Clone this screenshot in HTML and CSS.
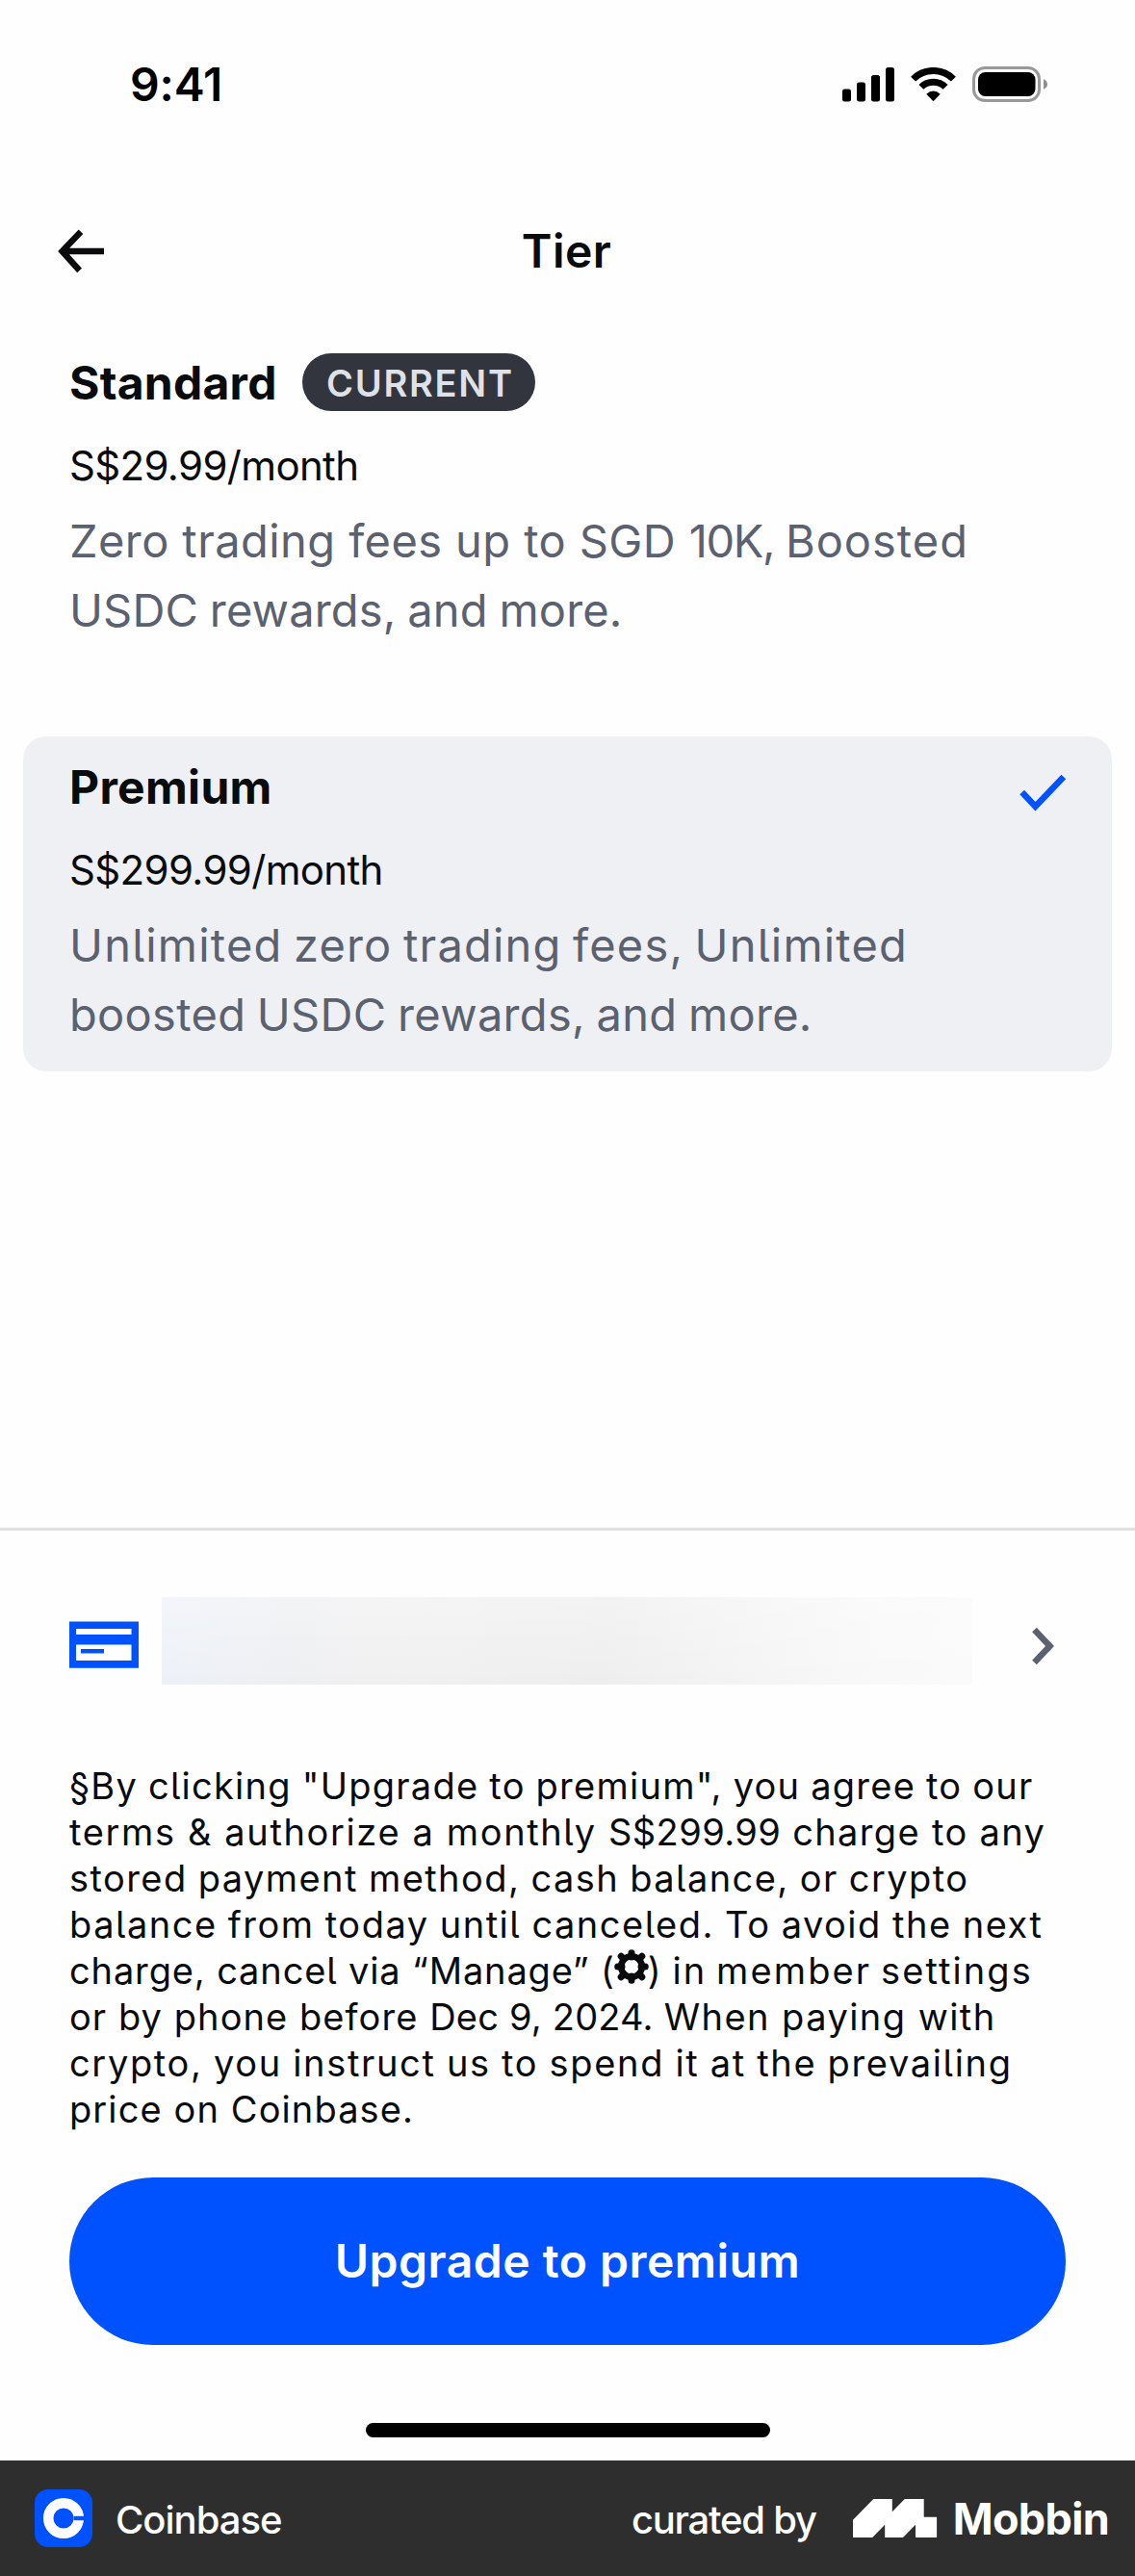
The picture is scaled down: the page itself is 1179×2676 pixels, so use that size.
FILE: index.html
```html
<!DOCTYPE html>
<html lang="en">
<head>
<meta charset="utf-8">
<title>Tier</title>
<link rel="stylesheet" href="styles.css">
</head>
<body>
<div class="screen">
  <header class="status-bar">
    <span class="time">9:41</span>
    <div class="status-icons">
      <svg class="signal" width="54" height="36" viewBox="0 0 54 36"><rect x="0" y="22.5" width="9" height="13" rx="2.5"/><rect x="15" y="15.5" width="9" height="20" rx="2.5"/><rect x="30" y="8" width="9" height="27.5" rx="2.5"/><rect x="45" y="0" width="9" height="35.5" rx="2.5"/></svg>
      <svg class="wifi" width="47" height="36" viewBox="0 0 47 36"><g fill="none" stroke="#000" stroke-width="7"><path d="M2.6 12.1A29.5 29.5 0 0 1 44.4 12.1"/><path d="M10.9 20.4A17.8 17.8 0 0 1 36.1 20.4"/></g><path d="M16.3 27.8Q23.5 21.2 30.7 27.8L23.5 35.2Z"/></svg>
      <svg class="battery" width="79" height="37" viewBox="0 0 79 37"><rect x="1.5" y="1.5" width="68" height="34" rx="11.5" fill="none" stroke="#999" stroke-width="3"/><rect x="6" y="6" width="59.500" height="25" rx="7.500"/><path d="M74 13.200Q78 15 78 18.500T74 23.800Z" fill="#8e8e8e"/></svg>
    </div>
  </header>

  <nav class="nav-bar">
    <svg class="back" width="48" height="46" viewBox="0 0 48 46" fill="none" stroke="#0a0b0d" stroke-width="6.500"><path d="M5 23H48M24 2.800L4.600 23L22.600 43"/></svg>
    <h1 class="nav-title">Tier</h1>
  </nav>

  <main class="tiers">
    <section class="tier">
      <div class="tier-head">
        <h2 class="tier-name name-standard">Standard</h2>
        <span class="badge">CURRENT</span>
      </div>
      <p class="price">S$29.99/month</p>
      <p class="desc"><span class="line d1">Zero trading fees up to SGD <span class="d1-amount">10K, </span><span class="d1-end">Boosted</span></span><span class="line d2">USDC rewards, and more.</span></p>
    </section>
    <section class="tier tier-selected">
      <div class="tier-head">
        <h2 class="tier-name name-premium">Premium</h2>
        <svg class="check" width="48" height="38" viewBox="0 0 48 38" fill="none" stroke="#0052ff" stroke-width="6.500"><path d="M2.700 18L16.500 32.800L45.800 2"/></svg>
      </div>
      <p class="price">S$299.99/month</p>
      <p class="desc"><span class="line d3">Unlimited zero trading fees, Unlimited</span><span class="line d4">boosted USDC rewards, and more.</span></p>
    </section>
  </main>

  <section class="checkout">
    <div class="payment">
      <svg class="card-icon" width="72" height="49" viewBox="0 0 72 49"><path fill="#0052ff" fill-rule="evenodd" d="M0 .4H72V48.700H0ZM7 8V14H64.500V8ZM7 24.500V41H64.500V24.500Z"/><path fill="#0052ff" d="M12 29H36V33.500H12Z"/></svg>
      <div class="redacted"></div>
      <svg class="chevron" width="24" height="40" viewBox="0 0 24 40" fill="none" stroke="#5b616e" stroke-width="6.500"><path d="M2.500 3L18.500 20L2.500 37"/></svg>
    </div>
    <p class="legal">
      <span class="line l1">§By clicking "Upgrade to premium", you agree to our</span>
      <span class="line l2">terms &amp; authorize a monthly <span class="l2-amount">S$299.99</span><span class="l2-end"> charge to any</span></span>
      <span class="line l3">stored payment method, cash balance, or crypto</span>
      <span class="line l4">balance from today until canceled. To avoid the next</span>
      <span class="line l5">charge, cancel via “Manage” (<svg class="gear" width="36" height="36" viewBox="-18 -18 36 36"><path d="M0-14.300V-10M0 14.300V10M-14.300 0H-10M14.300 0H10M-10.800-10.800L-8-8M10.800-10.800L8-8M-10.800 10.800L-8 8M10.800 10.800L8 8" stroke="#0a0b0d" stroke-width="7" stroke-linecap="round"/><circle r="10.800" fill="none" stroke="#0a0b0d" stroke-width="6.500"/></svg><span class="l5-end">) in member settings</span></span>
      <span class="line l6">or by phone before <span class="l6-date">Dec 9, 2024. </span><span class="l6-end">When paying with</span></span>
      <span class="line l7">crypto, you instruct us to spend it at the prevailing</span>
      <span class="line l8">price on Coinbase.</span>
    </p>
    <button class="cta" type="button">Upgrade to premium</button>
    <div class="home-indicator"></div>
  </section>

  <footer class="credit">
    <svg class="app-icon" width="60" height="60" viewBox="0 0 60 60"><rect width="60" height="60" rx="14" fill="#0052ff"/><circle cx="30" cy="30" r="15.800" fill="none" stroke="#fff" stroke-width="10.500"/><path fill="#0052ff" d="M40.500 27.800H52V32.200H40.500Z"/></svg>
    <span class="app-name">Coinbase</span>
    <span class="curated">curated by</span>
    <svg class="mobbin-mark" width="88" height="40" viewBox="0 0 88 40"><path fill="#fff" d="M0 21.700L21.300 0H40.800V13.300L53.800 0H73.700V18.700H87.100V40H65V26.700L52 40H33.200V26.700L20.200 40H0Z"/></svg>
    <span class="mobbin">Mobbin</span>
  </footer>
</div>
</body>
</html>
```
FILE: styles.css
```css
* { box-sizing: border-box; margin: 0; padding: 0; }

body {
  background: #fefefe;
  color: #0a0b0d;
  font-family: Inter, "Liberation Sans", sans-serif;
  font-feature-settings: "cv05";
}

svg { display: block; flex: none; }

.screen {
  display: flex;
  flex-direction: column;
  width: 1179px;
  height: 2676px;
  overflow: hidden;
}

/* Status bar */
.status-bar {
  display: flex;
  align-items: center;
  justify-content: space-between;
  height: 175px;
  padding: 0 90px 0 135px;
  color: #000;
}
.time { font-size: 48px; font-weight: 600; letter-spacing: -0.15px; }
.status-icons { display: flex; align-items: center; }
.wifi { margin-left: 17px; }
.battery { margin-left: 17px; }

/* Navigation */
.nav-bar {
  display: grid;
  grid-template-columns: 48px 1fr 48px;
  align-items: center;
  height: 172px;
  padding: 0 60px;
}
.nav-title {
  padding: 0 2px 2px 0;
  font-size: 48px;
  font-weight: 600;
  letter-spacing: 0.4px;
  text-align: center;
}

/* Tiers */
.tiers { flex: 1; padding: 0 24px; }
.tier { padding: 20px 48px 23px; }
.tier-selected {
  margin-top: 72px;
  padding-top: 22px;
  border-radius: 24px;
  background: #eef0f4;
}
.tier-head {
  display: flex;
  align-items: flex-start;
  height: 62px;
  margin-bottom: 25px;
}
.tier-name { width: 219px; font-size: 48px; font-weight: 700; line-height: 62px; }
.name-standard { letter-spacing: 0.25px; }
.name-premium { letter-spacing: 0.3px; }
.badge {
  width: 242px;
  height: 60px;
  margin-left: 23px;
  padding-left: 25px;
  border-radius: 30px;
  background: #32353d;
  color: #dee1e7;
  font-size: 38px;
  font-weight: 600;
  line-height: 62px;
  letter-spacing: 1.76px;
}
.check { margin: 18px 0 0 auto; }
.price { font-size: 42px; line-height: 60px; letter-spacing: -0.66px; }
.desc { margin-top: 12px; color: #5b616e; font-size: 47px; line-height: 72px; }
.line { display: block; white-space: nowrap; }
.d1 { letter-spacing: 0.42px; }
.d1-amount { letter-spacing: -1.4px; }
.d1-end { letter-spacing: 1px; }
.d2 { letter-spacing: 0.15px; word-spacing: -1.5px; }
.d3 { letter-spacing: 1.2px; word-spacing: -3px; }
.d4 { letter-spacing: 0.32px; word-spacing: -2px; }

/* Checkout */
.checkout {
  height: 969px;
  padding: 69px 72px 0;
  border-top: 3px solid #dfdfe0;
}
.payment { display: flex; align-items: center; height: 91px; }
.card-icon { margin-top: 8px; }
.redacted {
  width: 842px;
  height: 91px;
  margin-left: 24px;
  background:
    linear-gradient(180deg, rgba(255, 255, 255, 0.3), rgba(255, 255, 255, 0)),
    linear-gradient(100deg, #edf1f8 0%, #eeeff2 16%, #f0f0f0 30%, #eeeeee 55%, #f3f3f3 70%, #f8f8f8 85%, #fafafa 100%);
}
.chevron { margin: 11px 0 0 62px; }
.legal { margin-top: 81px; font-size: 38px; line-height: 48px; }
.l1 { letter-spacing: 1.25px; word-spacing: -1px; }
.l2 { letter-spacing: 1.63px; }
.l2-amount { letter-spacing: 0.4px; }
.l2-end { letter-spacing: 1.35px; }
.l3 { letter-spacing: 1.43px; word-spacing: -1px; }
.l4 { letter-spacing: 1.5px; word-spacing: -1px; }
.l5 { display: flex; letter-spacing: 0.861px; }
.l5-end { letter-spacing: 2.1px; word-spacing: -3px; }
.l6 { letter-spacing: 1.07px; }
.l6-date { letter-spacing: 0.2px; }
.l6-end { letter-spacing: 1.45px; }
.l7 { letter-spacing: 1.66px; word-spacing: -1px; }
.l8 { letter-spacing: 1.104px; }
.gear { margin: 2px -1px 0 -1px; }
.cta {
  display: block;
  width: 1035px;
  height: 174px;
  margin-top: 47px;
  padding-bottom: 2px;
  border: 0;
  border-radius: 87px;
  background: #0052ff;
  color: #fff;
  font: 600 48px Inter, "Liberation Sans", sans-serif;
  letter-spacing: 0.5px;
}
.home-indicator {
  width: 420px;
  height: 15px;
  margin: 81px auto 0;
  border-radius: 8px;
  background: #000;
}

/* Credit bar */
.credit {
  display: flex;
  align-items: center;
  height: 120px;
  padding: 0 27px 0 36px;
  background: #2e2e2e;
  color: #fff;
  font-size: 40px;
  font-weight: 500;
}
.app-name { margin-left: 24px; padding-top: 2px; letter-spacing: -1px; }
.curated { margin-left: auto; padding-top: 2px; letter-spacing: -1.25px; }
.mobbin-mark { margin-left: 38px; }
.mobbin { margin-left: 16px; font-size: 45px; font-weight: 700; letter-spacing: -0.69px; }
```
